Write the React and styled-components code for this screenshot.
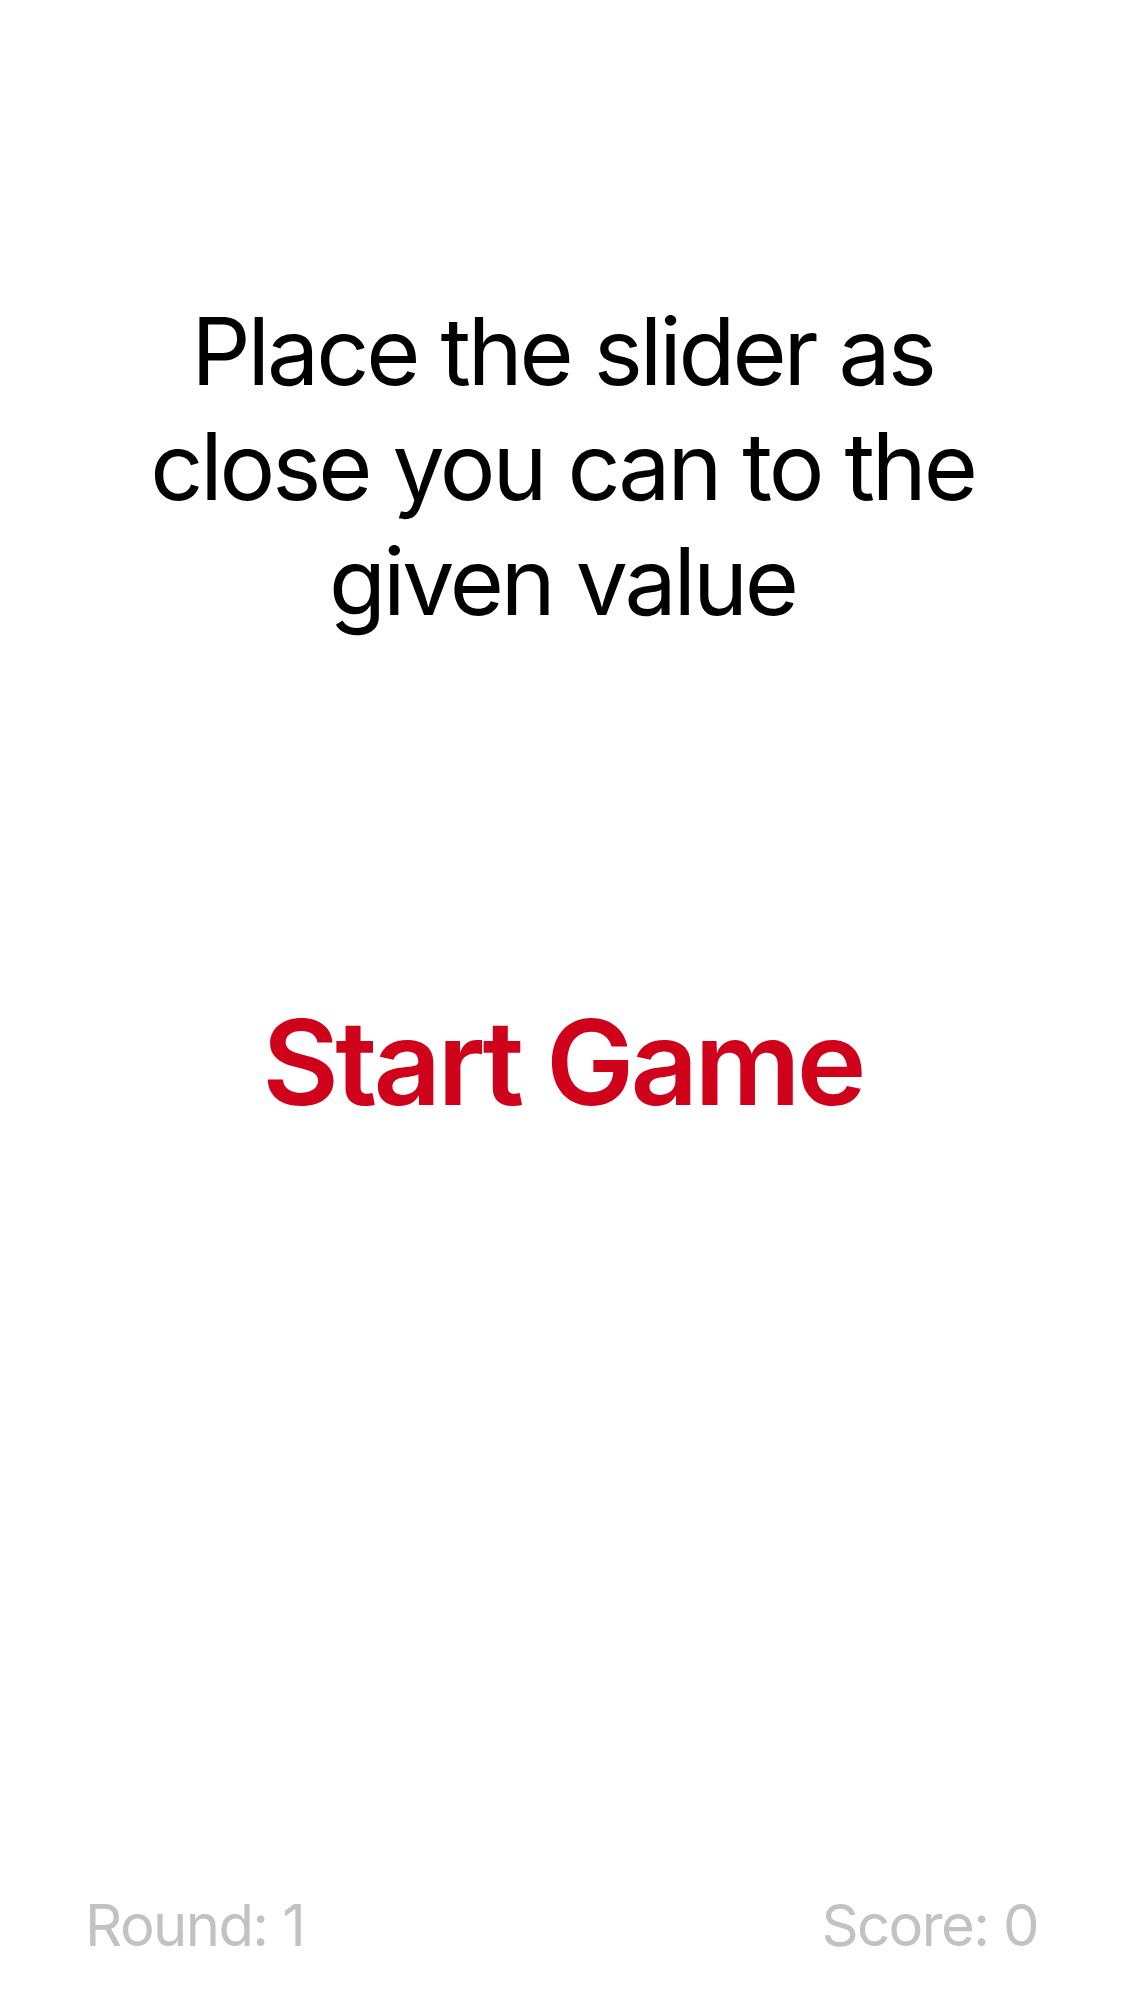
import React from "react";
import styled, { createGlobalStyle } from "styled-components";

const Global = createGlobalStyle`
  html, body { margin: 0; padding: 0; background: #fff; }
  body { font-family: Inter, "Noto Sans", "Liberation Sans", sans-serif; }
`;

const Screen = styled.div`
  height: 2001px;
  display: flex;
  flex-direction: column;
  align-items: center;
  box-sizing: border-box;
`;

const Prompt = styled.h1`
  margin: 294px 0 0;
  width: 900px;
  text-align: center;
  font-size: 93px;
  line-height: 115px;
  font-weight: 400;
  color: #000;
  letter-spacing: -3.1px;
`;

const StartButton = styled.button`
  margin-top: 353px;
  border: none;
  background: none;
  padding: 0;
  font-family: inherit;
  font-size: 118px;
  line-height: 140px;
  font-weight: 600;
  color: #d0021b;
  letter-spacing: -3.9px;
  cursor: pointer;
`;

const Footer = styled.div`
  margin-top: auto;
  width: 100%;
  box-sizing: border-box;
  padding: 0 87px 41px 85px;
  display: flex;
  justify-content: space-between;
  align-items: baseline;
`;

const Stat = styled.span`
  font-size: 58px;
  line-height: 70px;
  color: #c2c2c2;
  letter-spacing: -1.6px;
`;

export default function App() {
  return (
    <>
      <Global />
      <Screen>
        <Prompt>Place the slider as close you can to the given value</Prompt>
        <StartButton>Start Game</StartButton>
        <Footer>
          <Stat>Round: 1</Stat>
          <Stat>Score: 0</Stat>
        </Footer>
      </Screen>
    </>
  );
}
